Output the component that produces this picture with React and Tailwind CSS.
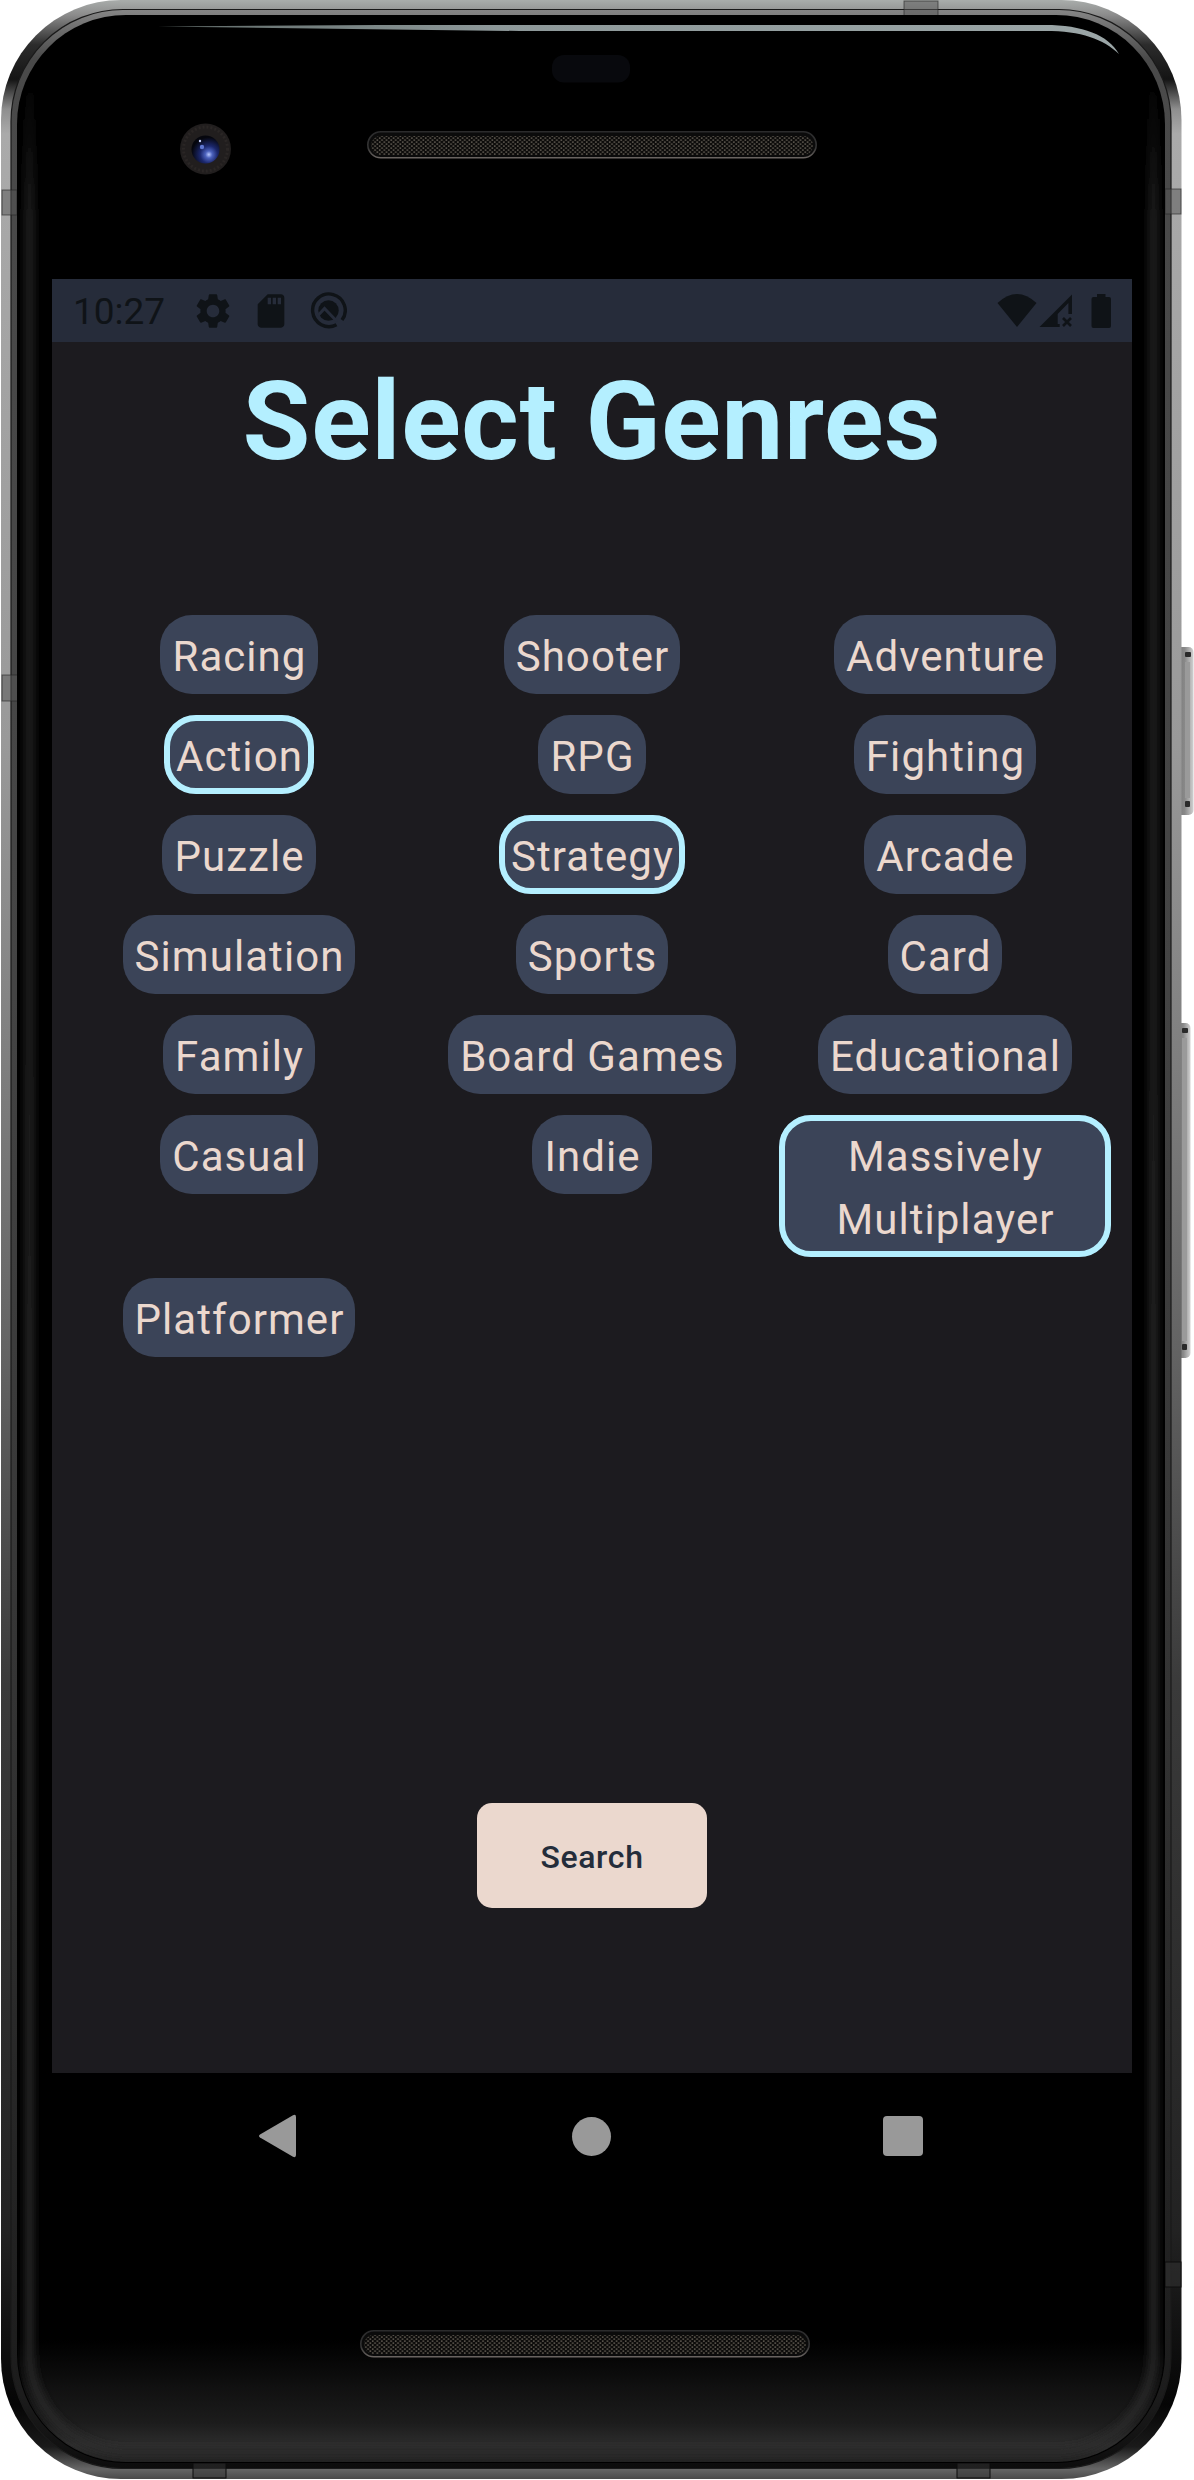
import React from "react";

const genres = [
  ["Racing"], ["Shooter"], ["Adventure"],
  ["Action", true], ["RPG"], ["Fighting"],
  ["Puzzle"], ["Strategy", true], ["Arcade"],
  ["Simulation"], ["Sports"], ["Card"],
  ["Family"], ["Board Games"], ["Educational"],
  ["Casual"], ["Indie"], ["Massively Multiplayer", true],
  ["Platformer"],
];

function Chip({ label, selected }) {
  return (
    <div
      className={
        "relative rounded-[32px] bg-[#3b4458] pb-[6px] pl-[12px] pr-[11px] pt-[10px] text-center text-[42px] leading-[63px] tracking-[1.05px] text-[#ebd8ce] " +
        (selected ? "after:absolute after:inset-0 after:rounded-[32px] after:border-[6px] after:border-[#b4efff] after:content-['']" : "")
      }
    >
      {label}
    </div>
  );
}

function Speaker({ id }) {
  return (
    <svg className="block h-[28px] w-[450px]" viewBox="0 0 450 28">
      <defs>
        <pattern id={id} width="4.6" height="4" patternUnits="userSpaceOnUse">
          <rect width="4.6" height="4" fill="#0c0b0a" />
          <rect x="0.4" y="0.4" width="1.6" height="1.4" fill="#6a645a" />
          <rect x="2.7" y="2.4" width="1.6" height="1.4" fill="#6a645a" />
        </pattern>
        <linearGradient id={id + "rim"} x1="0" y1="0" x2="0" y2="1">
          <stop offset="0" stopColor="#2b2b2c" />
          <stop offset="0.6" stopColor="#333" />
          <stop offset="1" stopColor="#6a6461" />
        </linearGradient>
      </defs>
      <rect x="0.8" y="0.8" width="448.4" height="26" rx="13" fill="#0b0b0b" stroke={"url(#" + id + "rim)"} strokeWidth="1.6" />
      <rect x="4" y="5" width="442" height="19" rx="9.5" fill={"url(#" + id + ")"} />
    </svg>
  );
}

function SideButton({ y, height, width }) {
  return (
    <g>
      <rect x="1176" y={y} width={width + 5.5} height={height} rx="5" fill="url(#button)" />
      <rect x={1181 + width - 8} y={y + 15} width="5" height={height - 32} fill="#9a9a9a" />
      <rect x={1181 + width - 8} y={y + 5} width="6" height="5" rx="1" fill="#2a2a2a" />
      <rect x={1181 + width - 8} y={y + height - 14} width="5" height="6" rx="1" fill="#2a2a2a" />
    </g>
  );
}

function PhoneBody() {
  return (
    <svg className="absolute inset-0 h-[2480px] w-[1194px]" viewBox="0 0 1194 2480">
      <defs>
        <linearGradient id="rim" x1="0" y1="0" x2="0" y2="1">
          <stop offset="0" stopColor="#a9adab" />
          <stop offset="0.006" stopColor="#8c8c8c" />
          <stop offset="0.018" stopColor="#2c2c2c" />
          <stop offset="0.032" stopColor="#141414" />
          <stop offset="0.044" stopColor="#8e8e8e" />
          <stop offset="0.054" stopColor="#aaa" />
          <stop offset="0.3" stopColor="#999" />
          <stop offset="0.45" stopColor="#7a7a7a" />
          <stop offset="0.55" stopColor="#626262" />
          <stop offset="0.68" stopColor="#3a3a3a" />
          <stop offset="0.9" stopColor="#222" />
          <stop offset="0.97" stopColor="#050505" />
          <stop offset="0.987" stopColor="#1a1a1a" />
          <stop offset="0.996" stopColor="#666" />
          <stop offset="1" stopColor="#4a4a4a" />
        </linearGradient>
        <linearGradient id="innerRim" x1="0" y1="0" x2="0" y2="1">
          <stop offset="0" stopColor="#868686" />
          <stop offset="0.02" stopColor="#4a4a4a" />
          <stop offset="0.4" stopColor="#444" />
          <stop offset="0.7" stopColor="#333" />
          <stop offset="0.97" stopColor="#1c1c1c" />
          <stop offset="1" stopColor="#0d0d0d" />
        </linearGradient>
        <linearGradient id="chin" x1="0" y1="0" x2="0" y2="1">
          <stop offset="0" stopColor="#111" stopOpacity="0" />
          <stop offset="0.4" stopColor="#131313" stopOpacity="0.9" />
          <stop offset="0.68" stopColor="#1c1c1c" />
          <stop offset="0.86" stopColor="#2d2d2d" />
          <stop offset="1" stopColor="#202020" />
        </linearGradient>
        <linearGradient id="glow" gradientUnits="userSpaceOnUse" x1="0" y1="0" x2="0" y2="2480">
          <stop offset="0.03" stopColor="#262626" stopOpacity="0" />
          <stop offset="0.09" stopColor="#262626" />
          <stop offset="1" stopColor="#2c2c2c" />
        </linearGradient>
        <filter id="soft" filterUnits="userSpaceOnUse" x="0" y="0" width="1194" height="2480">
          <feGaussianBlur stdDeviation="4" />
        </filter>
        <linearGradient id="shine" x1="0" y1="0" x2="1" y2="0">
          <stop offset="0" stopColor="#5f6a68" />
          <stop offset="0.35" stopColor="#8d9899" />
          <stop offset="1" stopColor="#9ba6a7" />
        </linearGradient>
        <linearGradient id="button" x1="0" y1="0" x2="1" y2="0">
          <stop offset="0" stopColor="#777" />
          <stop offset="0.5" stopColor="#888" />
          <stop offset="0.8" stopColor="#b4b4b4" />
          <stop offset="1" stopColor="#d2d2d2" />
        </linearGradient>
        <radialGradient id="lens" cx="0.62" cy="0.68" r="0.62">
          <stop offset="0" stopColor="#b8c8ff" />
          <stop offset="0.2" stopColor="#4c62bd" />
          <stop offset="0.5" stopColor="#1b276c" />
          <stop offset="1" stopColor="#05060d" />
        </radialGradient>
        <clipPath id="face"><rect x="18" y="16" width="1146" height="2446" rx="108" /></clipPath>
      </defs>
      <SideButton y={647} height={168} width={12} />
      <SideButton y={1023} height={335} width={9} />
      <rect x="1" y="0" width="1180.5" height="2479" rx="120" fill="url(#rim)" />
      <rect x="11" y="9.5" width="1160" height="2459" rx="112" fill="url(#innerRim)" stroke="#1a1a1a" strokeWidth="1.2" />
      <g fill="#555" fillOpacity="0.5" stroke="#222" strokeOpacity="0.6">
        <rect x="2" y="190" width="15" height="25" />
        <rect x="2" y="675" width="16" height="26" />
        <rect x="904" y="1" width="34" height="15" />
        <rect x="1165" y="189" width="16" height="25" />
      </g>
      <g fill="#333" fillOpacity="0.5" stroke="#0c0c0c">
        <rect x="1165" y="2262" width="16" height="25" />
        <rect x="193" y="2463" width="33" height="15" />
        <rect x="957" y="2463" width="33" height="15" />
      </g>
      <rect x="17" y="15" width="1148" height="2448" rx="109" fill="#000" />
      <g clipPath="url(#face)">
        <rect x="18" y="2340" width="1146" height="122" fill="url(#chin)" />
        <rect x="29.500" y="10" width="1124" height="2442" rx="98" fill="none" stroke="url(#glow)" strokeWidth="8" filter="url(#soft)" />
      </g>
      <path d="M158 26.5L380 25h665C1083 25 1108 35 1119 54C1103 39 1082 31 1045 31H520Z" fill="url(#shine)" />
      <rect x="552" y="55" width="78" height="27.500" rx="12" fill="#08090d" />
      <circle cx="205.500" cy="149" r="25.500" fill="#211e1e" />
      <circle cx="205.500" cy="149" r="22" fill="none" stroke="#2a2625" strokeWidth="3" strokeDasharray="2 2" />
      <circle cx="205.500" cy="149.500" r="14" fill="url(#lens)" />
      <circle cx="202" cy="147" r="2.200" fill="#5f76d0" />
      <circle cx="200" cy="141" r="1.200" fill="#c3cdfa" />
    </svg>
  );
}

function StatusBar() {
  return (
    <div className="flex h-[63px] items-center bg-[#262c3a] pl-[21px] pr-[19px] text-[#0f1317]">
      <span className="w-[98px] pt-[3px] text-[37px] leading-[60px]">10:27</span>
      <svg className="ml-[21px] h-[42px] w-[42px]" viewBox="0 0 24 24" fill="currentColor">
        <path d="M19.14 12.94c.04-.3.06-.61.06-.94 0-.32-.02-.64-.07-.94l2.03-1.580c.18-.14.23-.41.12-.61l-1.920-3.320c-.12-.22-.37-.29-.59-.22l-2.390.960c-.5-.38-1.030-.7-1.620-.940l-.360-2.540c-.04-.24-.24-.41-.48-.41h-3.840c-.24 0-.43.17-.47.41l-.360 2.540c-.59.24-1.130.57-1.620.940l-2.390-.960c-.22-.08-.47 0-.59.22L2.740 8.870c-.12.21-.08.47.12.61l2.030 1.580c-.05.3-.09.63-.09.94s.02.64.07.94l-2.030 1.580c-.18.14-.23.41-.12.61l1.920 3.320c.12.22.37.29.59.22l2.390-.960c.5.38 1.030.7 1.620.940l.360 2.540c.05.24.24.41.48.41h3.840c.24 0 .44-.17.47-.41l.360-2.540c.59-.24 1.130-.56 1.620-.940l2.390.960c.22.08.47 0 .59-.22l1.920-3.320c.12-.22.07-.47-.12-.61l-2.010-1.580zM12 15.600c-1.980 0-3.600-1.620-3.600-3.600s1.620-3.600 3.600-3.600 3.600 1.620 3.600 3.600-1.620 3.600-3.600 3.600z" />
      </svg>
      <svg className="ml-[17px] h-[40px] w-[40px]" viewBox="0 0 24 24" fill="currentColor">
        <path d="M18 2h-8L4.020 8 4 20c0 1.100.9 2 2 2h12c1.100 0 2-.9 2-2V4c0-1.100-.9-2-2-2zm-6 6h-2V4h2v4zm3 0h-2V4h2v4zm3 0h-2V4h2v4z" />
      </svg>
      <svg className="ml-[19px] h-[37px] w-[37px]" viewBox="0 0 37 37" fill="none">
        <path d="M26.500 32.700A16.300 16.300 0 1 1 32 28" stroke="currentColor" strokeWidth="3.400" />
        <circle cx="18.500" cy="18.500" r="10.200" fill="currentColor" />
        <path d="M8 23.500L14.500 16.500L27 29.500" stroke="#262c3a" strokeWidth="3" />
      </svg>
      <svg className="ml-auto h-[36px] w-[116px]" viewBox="0 0 116 36" fill="currentColor">
        <path d="M20 34L.5 10Q20-8 39.500 10Z" />
        <path d="M42.500 34L75 1.500V21h-3.600V10L60.700 21V31h2v3z" />
        <path d="M66 25l8 8m0-8l-8 8" stroke="currentColor" strokeWidth="2.600" />
        <path d="M100 1h8.500v3H112q2 0 2 2V33q0 2-2 2H96.500q-2 0-2-2V6q0-2 2-2H100z" />
      </svg>
    </div>
  );
}

export default function App() {
  return (
    <div className="relative h-[2480px] w-[1194px] overflow-hidden bg-white font-['Roboto',sans-serif]">
      <PhoneBody />
      <div className="relative flex h-full w-[1184px] flex-col">
        <div className="flex h-[279px] justify-center pt-[131px]">
          <Speaker id="top" />
        </div>
        <div className="ml-[52px] w-[1080px]">
          <StatusBar />
          <main className="flex h-[1731px] flex-col items-center bg-[#1c1b1f]">
            <h1 className="mt-[17px] text-[110.25px] font-bold leading-[126px] tracking-[0.65px] text-[#b4efff]">Select Genres</h1>
            <div className="mt-[130px] grid w-[1038px] grid-cols-3 gap-[21px]">
              {genres.map(([label, selected]) => (
                <div key={label} className="flex items-start justify-center">
                  <Chip label={label} selected={selected} />
                </div>
              ))}
            </div>
            <button className="mb-[165px] mt-auto h-[105px] w-[230px] rounded-[15px] bg-[#ebd8ce] pt-[3px] text-[32px] font-medium tracking-[0.65px] text-[#242d3b]">
              Search
            </button>
          </main>
          <nav className="flex h-[126px] items-center justify-between bg-black pl-[205px] pr-[209px]">
            <svg className="h-[44px] w-[40px]" viewBox="0 0 40 44" fill="#999"><path d="M3 20.500L36 1.200Q39 0 39 3V41Q39 44 36 42.800L3 23.500Q1 22 3 20.500Z" /></svg>
            <div className="ml-[3px] h-[39px] w-[39px] rounded-full bg-[#999]" />
            <div className="h-[40px] w-[40px] rounded-[4px] bg-[#999]" />
          </nav>
        </div>
        <div className="flex grow items-start pl-[360px] pt-[131px]">
          <Speaker id="bottom" />
        </div>
      </div>
    </div>
  );
}
